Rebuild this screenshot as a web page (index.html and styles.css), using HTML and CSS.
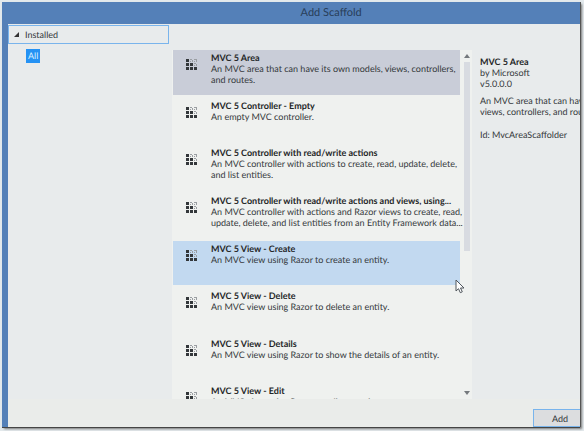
FILE: index.html
```
<!DOCTYPE html>
<html lang="en">
<head>
<meta charset="utf-8">
<title>Add Scaffold</title>
<link rel="stylesheet" href="styles.css">
</head>
<body>
<svg class="defs" aria-hidden="true">
  <symbol id="scaffold" viewBox="0 0 11 11">
    <path fill="#33373a" d="M0 0h3v3H0zM0 4h3v3H0zM4 4h3v3H4zM0 8h3v3H0zM4 8h3v3H4zM8 8h3v3H8z"/>
    <path fill="#9a9ea2" d="M4 0h2v1H4zM6 1h1v2H6zM4 2h1v1H4zM8 0h3v1H8zM10 1h1v2h-1zM8 2h1v1H8zM8 4h2v1H8zM10 5h1v2h-1zM8 6h1v1H8z"/>
  </symbol>
</svg>
<div class="window">
  <header class="titlebar"><h1>Add Scaffold</h1></header>
  <div class="content">
    <nav class="tree">
      <button class="tree-head" type="button"><svg class="caret" viewBox="0 0 5 5"><path d="M5 0v5H0z" fill="#333"/></svg>Installed</button>
      <button class="tree-item" type="button">All</button>
    </nav>
    <main class="list-panel">
      <div class="viewport">
        <div class="list">
          <button class="item selected" type="button"><svg class="icon"><use href="#scaffold"/></svg><span class="text"><strong>MVC 5 Area</strong><span>An MVC area that can have its own models, views, controllers,<br>and routes.</span></span></button>
          <button class="item" type="button"><svg class="icon"><use href="#scaffold"/></svg><span class="text"><strong>MVC 5 Controller - Empty</strong><span>An empty MVC controller.</span></span></button>
          <button class="item" type="button"><svg class="icon"><use href="#scaffold"/></svg><span class="text"><strong>MVC 5 Controller with read/write actions</strong><span>An MVC controller with actions to create, read, update, delete,<br>and list entities.</span></span></button>
          <button class="item" type="button"><svg class="icon"><use href="#scaffold"/></svg><span class="text"><strong>MVC 5 Controller with read/write actions and views, using...</strong><span>An MVC controller with actions and Razor views to create, read,<br>update, delete, and list entities from an Entity Framework data...</span></span></button>
          <button class="item hovered" type="button"><svg class="icon"><use href="#scaffold"/></svg><span class="text"><strong>MVC 5 View - Create</strong><span>An MVC view using Razor to create an entity.</span></span></button>
          <button class="item" type="button"><svg class="icon"><use href="#scaffold"/></svg><span class="text"><strong>MVC 5 View - Delete</strong><span>An MVC view using Razor to delete an entity.</span></span></button>
          <button class="item" type="button"><svg class="icon"><use href="#scaffold"/></svg><span class="text"><strong>MVC 5 View - Details</strong><span>An MVC view using Razor to show the details of an entity.</span></span></button>
          <button class="item" type="button"><svg class="icon"><use href="#scaffold"/></svg><span class="text"><strong>MVC 5 View - Edit</strong><span>An MVC view using Razor to edit an entity.</span></span></button>
        </div>
      </div>
      <div class="scrollbar">
        <svg class="arrow" viewBox="0 0 6 4"><path d="M0 4l3-4 3 4z" fill="#75797d"/></svg>
        <div class="track"><div class="thumb"></div></div>
        <svg class="arrow" viewBox="0 0 6 4"><path d="M0 0l3 4 3-4z" fill="#75797d"/></svg>
      </div>
    </main>
    <aside class="details">
      <h2>MVC 5 Area</h2>
      <p>by Microsoft<br>v5.0.0.0</p>
      <p>An MVC area that can have its own models,<br>views, controllers, and routes.</p>
      <p class="id">Id: MvcAreaScaffolder</p>
    </aside>
  </div>
  <footer class="footer"><button class="add" type="button">Add</button></footer>
</div>
<svg class="pointer" viewBox="0 0 10 15" aria-hidden="true"><path d="M1 1v11l2.5-2.3 1.8 4 2-.9-1.8-3.8H9z" fill="#fff" stroke="#50565c"/></svg>
</body>
</html>
```

FILE: styles.css
```
* { box-sizing: border-box; }
body {
  margin: 0;
  padding: 2px 4px 4px 2px;
  background: #e3e9ec;
  color: #34383b;
  font: 9px/11px Lato, "Open Sans", sans-serif;
  text-rendering: geometricPrecision;
}
button {
  font: inherit;
  color: inherit;
  text-rendering: inherit;
  border: 0;
  padding: 0;
  background: none;
  text-align: left;
}
h1, h2, p { margin: 0; }
.defs { position: absolute; width: 0; height: 0; }
.window {
  display: flex;
  flex-direction: column;
  height: calc(100vh - 6px);
  overflow: hidden;
  background: #e8ebec;
  border-left: 6px solid #5480b8;
  box-shadow: 0 1px 0 #454545, 1px 0 0 #555, 2px 2px 2px #777;
}
.titlebar {
  height: 22px;
  flex: none;
  background: #5480b8;
}
h1 {
  padding-left: 13%;
  text-align: center;
  font-size: 11px;
  font-weight: 400;
  line-height: 22px;
  color: #283e58;
}
.content {
  display: flex;
  flex: 1;
  min-height: 0;
}
.tree {
  width: 161px;
  flex: none;
  padding-top: 1px;
}
.tree-head {
  display: flex;
  align-items: center;
  gap: 6px;
  width: 100%;
  height: 19px;
  padding-left: 5px;
  border: 1px solid #79b4ec;
}
.caret { width: 5px; height: 5px; }
.tree-item {
  display: block;
  margin: 5px 0 0 18px;
  padding: 0 2px;
  line-height: 14px;
  background: #2592f4;
  color: #d9efff;
}
.list-panel {
  display: flex;
  width: 300px;
  flex: none;
  margin: 26px 0 0 3px;
  padding-left: 1px;
  background: #eff1ef;
}
.viewport {
  width: 291px;
  overflow: hidden;
}
.list {
  display: grid;
  grid-template-rows: repeat(8, 1fr);
  grid-template-columns: 287px;
  height: 381px;
}
.item {
  display: flex;
  align-items: flex-start;
  gap: 14px;
  padding: 2px 0 0 13px;
  margin-bottom: 3px;
  white-space: nowrap;
}
.selected { background: #c9cdd8; }
.hovered { background: #c2d9f0; }
.icon { width: 11px; height: 11px; flex: none; margin-top: 7px; }
.text { display: flex; flex-direction: column; }
strong, h2 { color: #242627; font-weight: 700; }
.scrollbar {
  display: flex;
  flex-direction: column;
  align-items: center;
  width: 6px;
  padding: 4px 0;
  gap: 4px;
}
.arrow { width: 6px; height: 4px; flex: none; }
.track { flex: 1; width: 6px; }
.thumb { height: 58%; background: #d8dbe1; }
.details {
  flex: 1;
  min-width: 0;
  padding: 32px 0 0 8px;
  overflow: hidden;
  white-space: nowrap;
}
h2 { font-size: 9px; line-height: 11px; }
.details p { margin-bottom: 6px; }
.details .id { margin-top: 12px; }
.footer {
  display: flex;
  justify-content: flex-end;
  align-items: flex-end;
  height: 28px;
  flex: none;
  background: #eaecea;
}
.add {
  width: 54px;
  height: 18px;
  margin-right: -7px;
  border: 1px solid #79b4ec;
  background: #dcdddf;
  text-align: center;
}
.pointer {
  position: absolute;
  left: 455px;
  top: 279px;
  width: 10px;
  height: 15px;
}
```
